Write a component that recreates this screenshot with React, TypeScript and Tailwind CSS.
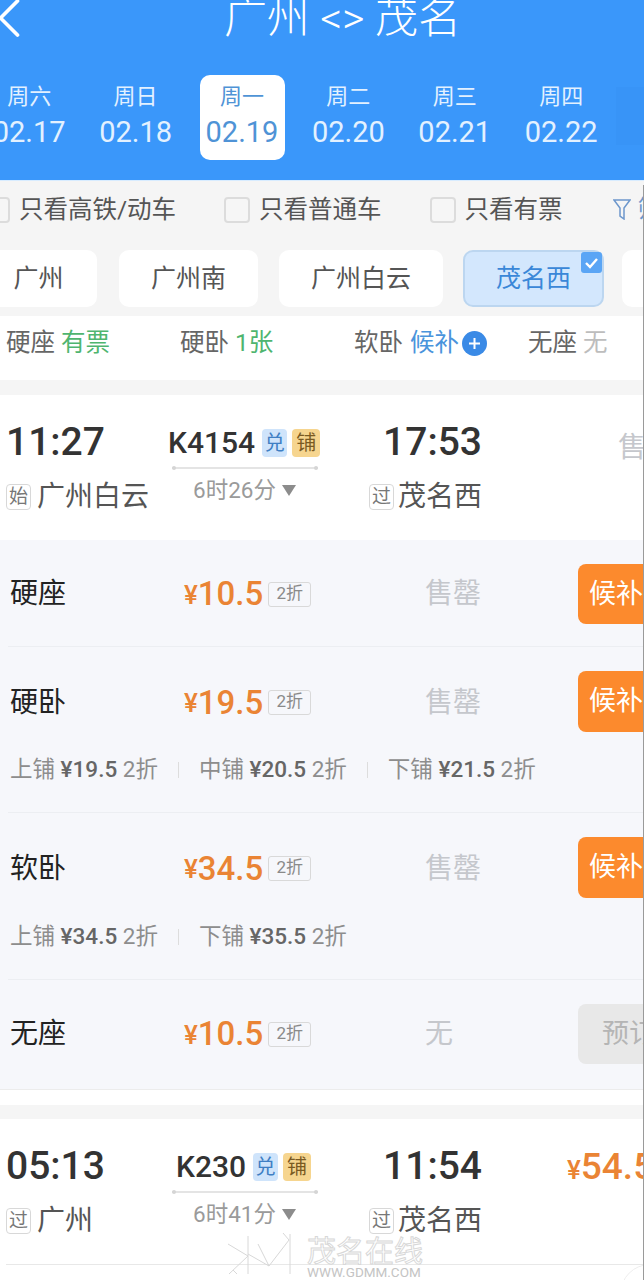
import { ChevronLeft } from "lucide-react";

const CJK = '"Noto Sans CJK SC", sans-serif';
const font = { fontFamily: `Roboto, ${CJK}` };

const days = [
  { week: "周六", date: "02.17" },
  { week: "周日", date: "02.18" },
  { week: "周一", date: "02.19", active: true },
  { week: "周二", date: "02.20" },
  { week: "周三", date: "02.21" },
  { week: "周四", date: "02.22" },
];

function DayTile({ week, date, active }: { week: string; date: string; active?: boolean }) {
  return (
    <div className="w-[106.4px] shrink-0 flex justify-center">
      <div className={`w-[85px] h-[85px] rounded-[10px] flex flex-col items-center pt-[8px] pr-[2px] ${active ? "bg-white text-[#4f93d6]" : "text-[#e3f1ff]"}`}>
        <div className="text-[22px] leading-[28px]">{week}</div>
        <div className="text-[29px] leading-[34px] mt-[4px] whitespace-nowrap">{date}</div>
      </div>
    </div>
  );
}

function Check({ label, className }: { label: string; className?: string }) {
  return (
    <div className={`flex items-center shrink-0 ${className ?? ""}`}>
      <span className="w-[26px] h-[26px] rounded-[4px] border-2 border-[#dcdcdc] bg-[#f6f6f6] shrink-0" />
      <span className="ml-[9px] text-[24.5px] leading-[26px] text-[#555] whitespace-nowrap">{label}</span>
    </div>
  );
}

function Station({ name, className }: { name: string; className: string }) {
  return (
    <div className={`h-[57px] bg-white rounded-[10px] flex items-center justify-center text-[25px] text-[#555] shrink-0 ${className}`}>
      {name}
    </div>
  );
}

function Seat({ name, status, statusColor, className }: { name: string; status: string; statusColor: string; className: string }) {
  return (
    <div className={`text-[24.5px] leading-[36px] text-[#666] whitespace-nowrap shrink-0 ${className}`}>
      {name} <span className={statusColor}>{status}</span>
    </div>
  );
}

function Tag({ text }: { text: string }) {
  return (
    <span className="w-[25px] h-[26px] border border-[#d8d8d8] rounded-[4px] text-[19px] leading-[24px] text-[#777] flex justify-center shrink-0">
      {text}
    </span>
  );
}

function TrainRow({
  depart, number, arrive, from, fromTag, duration, numberLeft, right,
}: {
  depart: string; number: string; arrive: string; from: string; fromTag: string; duration: string; numberLeft: string; right: React.ReactNode;
}) {
  return (
    <div className="h-[145px] bg-white flex overflow-hidden">
      <div className="w-[168px] pl-[6px] pt-[23px] shrink-0">
        <div className="text-[39px] leading-[48px] font-medium text-[#333]">{depart}</div>
        <div className="flex items-center mt-[13px] h-[36px]">
          <Tag text={fromTag} />
          <span className="ml-[6px] text-[28px] text-[#555] whitespace-nowrap">{from}</span>
        </div>
      </div>
      <div className="w-[154px] shrink-0 pt-[34px] flex flex-col">
        <div className={`flex items-center h-[28px] ${numberLeft}`}>
          <span className="text-[30px] font-medium leading-[28px] text-[#333]">{number}</span>
          <span className="ml-[7px] w-[25px] h-[28px] rounded-[4px] bg-[#cfe4fb] text-[#3f7fc4] text-[20px] flex items-center justify-center shrink-0">兑</span>
          <span className="ml-[5px] w-[28px] h-[28px] rounded-[4px] bg-[#f6d58f] text-[#7a5a22] text-[20px] flex items-center justify-center shrink-0">铺</span>
        </div>
        <div className="ml-[4px] w-[146px] h-[2px] bg-[#e4e4e4] mt-[10px] flex justify-between items-center">
          <span className="w-[4px] h-[4px] rounded-full bg-[#d5d5d5]" />
          <span className="w-[4px] h-[4px] rounded-full bg-[#d5d5d5]" />
        </div>
        <div className="flex items-center mt-[6px] ml-[25px] text-[22.5px] leading-[30px] text-[#9a9a9a] whitespace-nowrap">
          {duration}
          <span className="ml-[6px] w-0 h-0 border-x-[7px] border-x-transparent border-t-[11px] border-t-[#8c8c8c]" />
        </div>
      </div>
      <div className="w-[160px] shrink-0 pt-[23px] flex flex-col items-end">
        <div className="text-[39px] leading-[48px] font-medium text-[#333]">{arrive}</div>
        <div className="flex items-center mt-[13px] h-[36px]">
          <Tag text="过" />
          <span className="ml-[4px] text-[28px] text-[#555] whitespace-nowrap">茂名西</span>
        </div>
      </div>
      {right}
    </div>
  );
}

function Fare({
  name, price, status, action, disabled, height, sub, noLine,
}: {
  name: string; price: string; status: string; action: string; disabled?: boolean; height: string; sub?: React.ReactNode; noLine?: boolean;
}) {
  return (
    <div className={`ml-[8px] pt-[24px] overflow-hidden ${height} ${noLine ? "" : "border-b border-[#eceef2]"}`}>
      <div className={`flex items-center ${sub ? "h-[63px]" : "h-[60px]"}`}>
        <div className="w-[176px] pl-[2px] text-[28px] text-[#222] shrink-0">{name}</div>
        <div className="w-[241px] flex items-center shrink-0">
          <span className="text-[26px] font-medium text-[#ea8434] mt-[2px]">¥</span>
          <span className="text-[33px] font-medium text-[#ea8434]">{price}</span>
          <span className="ml-[5px] w-[43px] h-[25px] border border-[#d9d9d9] rounded-[3px] text-[17px] leading-[21px] text-[#8a8a8a] text-center">2折</span>
        </div>
        <div className="w-[153px] text-[28px] text-[#c5c7cc] shrink-0">{status}</div>
        <div className={`w-[80px] self-start rounded-[8px] flex items-center text-[27px] whitespace-nowrap shrink-0 ${sub ? "h-[61px]" : "h-[60px]"} ${disabled ? "bg-[#e8e8e8] text-[#b5b5b5] pl-[24px]" : "bg-[#fc8a2d] text-white pl-[11px]"}`}>
          {action}
        </div>
      </div>
      {sub}
    </div>
  );
}

function Berth({ name, price }: { name: string; price: string }) {
  return (
    <span className="text-[22.5px] text-[#8d8d8d] whitespace-nowrap">
      {name} <span className="font-medium text-[#666]">{price}</span> 2折
    </span>
  );
}

function Divider() {
  return <span className="w-[1px] h-[16px] bg-[#dddddd] mx-[20px] shrink-0" />;
}

export default function App() {
  return (
    <div className="relative w-[644px] h-[1280px] overflow-hidden bg-white" style={font}>
      {/* header */}
      <div className="relative h-[180px] bg-[#3a97fa] overflow-hidden">
        <div className="relative h-[75px] flex justify-center">
          <ChevronLeft className="absolute left-[-25px] top-[-16px] text-white" size={68} strokeWidth={1.3} />
          <div className="text-[43px] leading-[36px] font-light text-white whitespace-nowrap ml-[41px]">广州 &lt;&gt; 茂名</div>
        </div>
        <div className="flex -ml-[23px]">
          {days.map((d) => (
            <DayTile key={d.date} {...d} />
          ))}
        </div>
        <div className="absolute left-[616px] top-[87px] w-[28px] h-[58px] bg-[#3894f7]" />
      </div>

      {/* filters */}
      <div className="h-[70px] bg-[#f5f5f5] flex items-start pt-[16px] border-t border-[#d8ecff]">
        <Check label="只看高铁/动车" className="-ml-[16px]" />
        <Check label="只看普通车" className="ml-[48px]" />
        <Check label="只看有票" className="ml-[48px]" />
        <svg className="ml-[50px] mt-[2px] shrink-0" width="18" height="21" viewBox="0 0 18 21" fill="none" stroke="#6d97cc" strokeWidth="1.5">
          <path d="M1 1h16l-6 8v11l-4-3V9z" />
        </svg>
        <span className="ml-[7px] text-[24px] leading-[24px] text-[#6d97cc] whitespace-nowrap">筛选</span>
      </div>

      {/* stations */}
      <div className="h-[66px] bg-[#f5f5f5] flex overflow-hidden -ml-[20px]">
        <Station name="广州" className="w-[117px]" />
        <Station name="广州南" className="w-[139px] ml-[22px]" />
        <Station name="广州白云" className="w-[164px] ml-[21px]" />
        <div className="relative w-[141px] h-[57px] ml-[20px] shrink-0 rounded-[10px] bg-[#d3e7fd] border-2 border-[#bcd6f0] text-[#3a87d8] text-[25px] flex items-center justify-center">
          茂名西
          <span className="absolute right-0 top-0 w-[21px] h-[21px] rounded-[3px] bg-[#5aa5f5] flex items-center justify-center">
            <svg width="15" height="12" viewBox="0 0 15 12" fill="none">
              <path d="M2 6l4 4 7-8" stroke="white" strokeWidth="2.4" />
            </svg>
          </span>
        </div>
        <Station name="" className="w-[60px] ml-[18px]" />
      </div>

      {/* seat summary */}
      <div className="h-[64px] bg-white flex items-start pt-[9px] pl-[6px]">
        <Seat name="硬座" status="有票" statusColor="text-[#4fb56f]" className="w-[174px]" />
        <Seat name="硬卧" status="1张" statusColor="text-[#4fb56f]" className="w-[174px]" />
        <div className="w-[174px] h-[36px] flex items-center text-[24.5px] text-[#666] shrink-0 whitespace-nowrap">
          软卧 <span className="ml-[7px] text-[#4a94dc]">候补</span>
          <span className="ml-[3px] w-[25px] h-[25px] rounded-full bg-[#3a8ae6] text-white flex items-center justify-center">
            <svg width="15" height="15" viewBox="0 0 15 15">
              <path d="M7.5 2v11M2 7.5h11" stroke="white" strokeWidth="2" />
            </svg>
          </span>
        </div>
        <Seat name="无座" status="无" statusColor="text-[#bdbdbd]" className="w-[100px]" />
      </div>

      <div className="h-[15px] bg-[#f5f5f5]" />

      <TrainRow
        depart="11:27" number="K4154" numberLeft="" arrive="17:53" from="广州白云" fromTag="始" duration="6时26分"
        right={<div className="ml-[136px] pt-[32px] text-[28px] text-[#c5c7cc] whitespace-nowrap shrink-0">售罄</div>}
      />

      {/* fares */}
      <div className="bg-[#f6f7fb] h-[549px]">
        <Fare name="硬座" price="10.5" status="售罄" action="候补" height="h-[107px]" />
        <Fare
          name="硬卧" price="19.5" status="售罄" action="候补" height="h-[166px]"
          sub={
            <div className="flex items-center mt-[19px] pl-[2px]">
              <Berth name="上铺" price="¥19.5" />
              <Divider />
              <Berth name="中铺" price="¥20.5" />
              <Divider />
              <Berth name="下铺" price="¥21.5" />
            </div>
          }
        />
        <Fare
          name="软卧" price="34.5" status="售罄" action="候补" height="h-[167px]"
          sub={
            <div className="flex items-center mt-[20px] pl-[2px]">
              <Berth name="上铺" price="¥34.5" />
              <Divider />
              <Berth name="下铺" price="¥35.5" />
            </div>
          }
        />
        <Fare name="无座" price="10.5" status="无" action="预订" disabled height="h-[108px]" noLine />
      </div>

      <div className="h-[1px] bg-[#ececec]" />
      <div className="h-[15px] bg-white" />
      <div className="h-[14px] bg-[#f5f5f5]" />

      <TrainRow
        depart="05:13" number="K230" numberLeft="ml-[8px]" arrive="11:54" from="广州" fromTag="过" duration="6时41分"
        right={
          <div className="ml-[85px] pt-[20px] flex items-baseline text-[#ea8434] font-medium whitespace-nowrap shrink-0">
            <span className="text-[26px]">¥</span>
            <span className="text-[37px]">54.5</span>
          </div>
        }
      />
      <div className="ml-[6px] h-[1px] bg-[#e8e8e8]" />

      {/* watermark */}
      <div className="absolute left-[225px] top-[1232px] flex items-start">
        <svg width="66" height="44" viewBox="0 0 66 44" fill="none" stroke="#d8d8d8" strokeWidth="1">
          <path d="M23 4v38M65 2v40M4 42L23 24 3 12M23 22l21 12 20-26-6-7M44 34L33 12M8 38l4 4" />
        </svg>
        <div className="ml-[16px] mt-[8px] flex flex-col items-start">
          <div className="text-[29px] leading-[24px] text-transparent [-webkit-text-stroke:1px_#d8d8d8] whitespace-nowrap">茂名在线</div>
          <div className="text-[13.5px] leading-[12px] mt-[2px] text-[#c4c4c4] whitespace-nowrap">WWW.GDMM.COM</div>
        </div>
      </div>

      {/* floating button corner */}
      <div className="absolute left-[620px] top-[1264px] w-[60px] h-[60px] rounded-full bg-white border border-[#eeeeee]" />

      {/* right edge line */}
      <div className="absolute right-0 top-[185px] bottom-0 w-[1px] bg-[#9a9a9a]" />
    </div>
  );
}
